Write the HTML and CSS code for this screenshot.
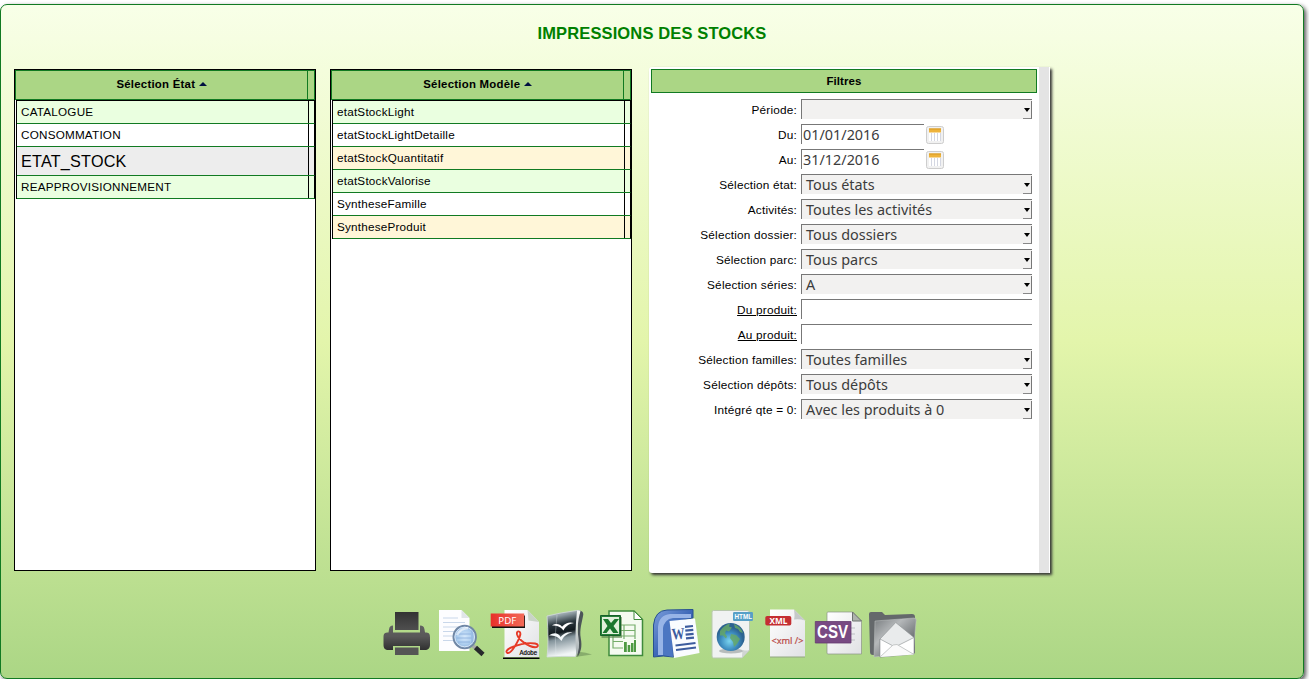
FILE: index.html
```html
<!DOCTYPE html>
<html lang="fr">
<head>
<meta charset="utf-8">
<title>Impressions des stocks</title>
<link rel="stylesheet" href="styles.css">
</head>
<body>
<main class="panel">
  <h1 class="title">IMPRESSIONS DES STOCKS</h1>
  <div class="columns">
    <section class="list">
      <header class="list-head"><span class="head-label">Sélection État <i class="sort"></i></span><span class="head-end"></span></header>
      <ul class="rows">
        <li class="row mint"><span>CATALOGUE</span></li>
        <li class="row"><span>CONSOMMATION</span></li>
        <li class="row selected"><span>ETAT_STOCK</span></li>
        <li class="row mint"><span>REAPPROVISIONNEMENT</span></li>
      </ul>
    </section>
    <section class="list">
      <header class="list-head"><span class="head-label">Sélection Modèle <i class="sort"></i></span><span class="head-end"></span></header>
      <ul class="rows">
        <li class="row mint"><span>etatStockLight</span></li>
        <li class="row"><span>etatStockLightDetaille</span></li>
        <li class="row cream"><span>etatStockQuantitatif</span></li>
        <li class="row mint"><span>etatStockValorise</span></li>
        <li class="row"><span>SyntheseFamille</span></li>
        <li class="row cream"><span>SyntheseProduit</span></li>
      </ul>
    </section>
    <section class="filters">
      <div class="filters-body">
        <h2 class="filters-head">Filtres</h2>
        <div class="field"><span class="label">Période:</span><div class="select"><span></span><b class="arrow"></b></div></div>
        <div class="field"><span class="label">Du:</span><div class="input date">01/01/2016</div>
          <svg class="cal" viewBox="0 0 18 18"><rect x=".5" y=".5" width="17" height="17" rx="2" fill="#f1f1f1" stroke="#cdcdcd"/><path d="M3 6h12v9H3z" fill="#fff"/><path d="M3 2.500h12v4H3z" fill="#eeb33b"/><path d="M3 3h12" stroke="#d79a25"/><path d="M5.500 7v8M8.500 7v8M11.500 7v8M14.500 7v8" stroke="#cfd3df" stroke-width=".9"/></svg></div>
        <div class="field"><span class="label">Au:</span><div class="input date">31/12/2016</div>
          <svg class="cal" viewBox="0 0 18 18"><rect x=".5" y=".5" width="17" height="17" rx="2" fill="#f1f1f1" stroke="#cdcdcd"/><path d="M3 6h12v9H3z" fill="#fff"/><path d="M3 2.500h12v4H3z" fill="#eeb33b"/><path d="M3 3h12" stroke="#d79a25"/><path d="M5.500 7v8M8.500 7v8M11.500 7v8M14.500 7v8" stroke="#cfd3df" stroke-width=".9"/></svg></div>
        <div class="field"><span class="label">Sélection état:</span><div class="select"><span>Tous états</span><b class="arrow"></b></div></div>
        <div class="field"><span class="label">Activités:</span><div class="select"><span>Toutes les activités</span><b class="arrow"></b></div></div>
        <div class="field"><span class="label">Sélection dossier:</span><div class="select"><span>Tous dossiers</span><b class="arrow"></b></div></div>
        <div class="field"><span class="label">Sélection parc:</span><div class="select"><span>Tous parcs</span><b class="arrow"></b></div></div>
        <div class="field"><span class="label">Sélection séries:</span><div class="select"><span>A</span><b class="arrow"></b></div></div>
        <div class="field"><span class="label link">Du produit:</span><div class="input"></div></div>
        <div class="field"><span class="label link">Au produit:</span><div class="input"></div></div>
        <div class="field"><span class="label">Sélection familles:</span><div class="select"><span>Toutes familles</span><b class="arrow"></b></div></div>
        <div class="field"><span class="label">Sélection dépôts:</span><div class="select"><span>Tous dépôts</span><b class="arrow"></b></div></div>
        <div class="field"><span class="label">Intégré qte = 0:</span><div class="select"><span>Avec les produits à 0</span><b class="arrow"></b></div></div>
      </div>
      <div class="scroll"></div>
    </section>
  </div>
  <nav class="tools">
    <svg class="tool" viewBox="0 0 54 56">
      <defs><linearGradient id="pr" x2="0" y2="1"><stop offset="0" stop-color="#333"/><stop offset="1" stop-color="#4f4f4f"/></linearGradient>
      <linearGradient id="prb" x2="0" y2="1"><stop offset="0" stop-color="#626262"/><stop offset=".45" stop-color="#585858"/><stop offset="1" stop-color="#303030"/></linearGradient></defs>
      <path d="M15 6h23.500v18H15z" fill="url(#pr)"/>
      <path d="M13 19.500v7h27v-7c3 0 4 1 4.500 4l.5 3c4 0 5 1 5 5v7c0 4-2 5.500-5 5.500h-5v-4H13v4H8.500c-3.500 0-5-1.500-5-5.500v-7c0-4 1-5 5-5l.5-3c.5-3 1.500-4 4-4z" fill="url(#prb)"/>
      <path d="M15 41.500h23.500V49H15z" fill="#555"/>
    </svg>
    <svg class="tool" viewBox="0 0 54 56">
      <defs><radialGradient id="ln"><stop offset="0" stop-color="#d5e8fb"/><stop offset=".7" stop-color="#a9cbed"/><stop offset="1" stop-color="#86a9d2"/></radialGradient></defs>
      <path d="M5 4h22.500l8 8v33H5z" fill="#fdfdff"/><path d="M27.500 4v8h8z" fill="#e0e5e8"/>
      <path d="M9 12h15M9 16.500h22M9 21h22M9 25.500h14M9 30h12M9 34.500h11" stroke="#c3d2e8" stroke-width=".9"/>
      <path d="M39 40l4 3" stroke="#aaa" stroke-width="4"/><path d="M41.500 41.500l7.500 7" stroke="#27292c" stroke-width="4.500"/>
      <circle cx="30.700" cy="31" r="11.300" fill="url(#ln)" stroke="#7187a4" stroke-width="1.800"/><circle cx="30.700" cy="31" r="9.800" fill="none" stroke="#d6e6f7"/>
      <path d="M23 28h14M22.500 32h15M24 36h12M38 24v13" stroke="#86abdb" stroke-width=".8"/><path d="M23 29q4-7 11-7" stroke="#fff" stroke-width="2.500" fill="none" opacity=".6"/>
    </svg>
    <svg class="tool" viewBox="0 0 54 56">
      <defs><linearGradient id="pg" x2="1" y2="1"><stop offset="0" stop-color="#fff"/><stop offset="1" stop-color="#e0e1e4"/></linearGradient><linearGradient id="rd" x2="1"><stop offset="0" stop-color="#e8302a"/><stop offset="1" stop-color="#f36a58"/></linearGradient></defs>
      <path d="M16.500 4h23l11.500 12v35H16.500z" fill="url(#pg)"/><path d="M39.500 4l1 10.500 10.500 1.500z" fill="#c9d4c7"/>
      <path d="M15 52.200h36.500" stroke="#000" stroke-width="1.600"/>
      <path d="M19.500 47c-2.500-1-.5-4 5-6 7-2.800 16-4.500 22.500-3.500 4 .8 3.500 3.800 0 3.800-6-.5-16.500-7-18-13-.8-4 4-4 3.300.5C31 34 23.500 48 19.500 47z" fill="none" stroke="#e63a27" stroke-width="1.900"/>
      <path d="M4 9.500h33V22H4z" fill="#111"/><path d="M2.700 7.500h33.500v13H2.700z" fill="url(#rd)"/>
      <text x="10.300" y="18" class="t-pdf" textLength="18" lengthAdjust="spacingAndGlyphs">PDF</text>
      <text x="31.500" y="49" class="t-adobe" textLength="17.500" lengthAdjust="spacingAndGlyphs">Adobe</text>
    </svg>
    <svg class="tool" viewBox="0 0 54 56">
      <defs><linearGradient id="oo" x2=".15" y2="1"><stop offset="0" stop-color="#dfe6e8"/><stop offset=".17" stop-color="#8d9aa1"/><stop offset=".34" stop-color="#2b373e"/><stop offset=".52" stop-color="#11191e"/><stop offset=".66" stop-color="#83939b"/><stop offset="1" stop-color="#f1f5f6"/></linearGradient>
      <linearGradient id="oe" x2="0" y2="1"><stop offset="0" stop-color="#f5f7f7"/><stop offset="1" stop-color="#a2abae"/></linearGradient></defs>
      <path d="M33 51l17-2.500q-8-3-13-2.500z" fill="#6d8f5a" opacity=".6"/>
      <path d="M36 4.500q5.500 0 5.300 4c-1.500 9-4 15-2.500 24 1.500 8 .2 13-3.300 18.500z" fill="#4c5558"/>
      <path d="M5 10q14-3.500 29.500-5.500h3C34.500 16 33.500 23 35 31c1.200 8 1 13-1.500 19.500Q20 50 5 51 7 36 5 10z" fill="url(#oo)" stroke="#d3dadd" stroke-width=".8"/>
      <path d="M35 4.500l3.500.5q-4.500 15-2 27 1.800 10-2 18-1-8-1-18 0-14 1.500-27.500z" fill="url(#oe)"/>
      <path d="M15 9q-3 20-1 41" stroke="#e9f0f1" stroke-width=".7" fill="none" opacity=".45"/>
      <path d="M10 19.500c4-2.500 8-1.500 10 1.200 4-4 7.500-5 12-3.700-6 1-8.500 3.500-10.500 7.500-3-4-6.500-5-11.500-5z" fill="#fff"/><path d="M7 29.500c5-3.500 9.500-2.500 11.500 1.500 3.500-4 7-5.500 12-4.500-6.500 1.500-9 4-11 8.500-3.500-4.500-7-5.500-12.500-5.500z" fill="#f4f8fa"/>
    </svg>
    <svg class="tool" viewBox="0 0 54 56">
      <path d="M13 5h25l8.500 8.500V49.500H13z" fill="#f5fbf1" stroke="#3f8a3c" stroke-width="1.500"/><path d="M38 5v8.500h8.500z" fill="#fff" stroke="#3f8a3c"/>
      <path d="M17 19h22v23H17zM17 24.500h22M17 30h22M17 35.500h22M28 19v23" fill="none" stroke="#76ad6b" stroke-width="1.200"/>
      <path d="M27 33h13v13H27z" fill="#f5fbf1"/><path d="M28 36h2.800v10H28zM31.700 39h2.500v7h-2.500zM35 37h2.500v9H35zM38 34h2v12h-2z" fill="#4e9a43"/>
      <path d="M5.500 11H26v21H5.500z" fill="#548248" opacity=".6"/><path d="M4.500 9.500h20v20h-20z" fill="#278039" stroke="#17602a"/><path d="M6 11h17v17H6z" fill="#e1f0db"/>
      <path d="M7 13h5l3 4 3.500-4H23l-5.500 7 5 7h-5.300L14 22.500 10.500 27H6.500l5-7z" fill="#1b772e"/>
    </svg>
    <svg class="tool" viewBox="0 0 54 56">
      <defs><linearGradient id="wd" x2="1" y2="1"><stop offset="0" stop-color="#7c9edb"/><stop offset=".5" stop-color="#3e68b8"/><stop offset="1" stop-color="#244b99"/></linearGradient></defs>
      <path d="M3.500 51V19Q5 4.500 17 4l26-.5V12L22 16l1.500 35Q13 49 3.500 51z" fill="url(#wd)" stroke="#27508f"/>
      <path d="M8 49V21Q9 9 20 8h21v4H23q-9 1-10 11v26z" fill="#98b4e7"/><path d="M13 49V23q1-9 10-10l18-1-20 4 2 35z" fill="#4c76c2"/>
      <path d="M19.500 15L45 12.500 49.500 47 24 52z" fill="#fafcff"/>
      <text x="22" y="33.500" class="t-word" textLength="13" lengthAdjust="spacingAndGlyphs" transform="rotate(-4 22 33)">W</text>
      <path d="M35 20.800l8-.8M35.300 24.600l8-.8M35.600 28.600l8-.8M36 32.400l8-.8M25.500 39.500l20-2.500M26 44l20-2.500" stroke="#3d5c9e" stroke-width="2.200"/>
    </svg>
    <svg class="tool" viewBox="0 0 54 56">
      <defs><radialGradient id="gl" cx=".45" cy=".65"><stop offset="0" stop-color="#7ad4ef"/><stop offset=".6" stop-color="#3f8fc2"/><stop offset="1" stop-color="#2c6291"/></radialGradient></defs>
      <path d="M9.500 4.500H43q2.500 0 2.500 2V44L38 52H9.500Q8 52 8 50V6q0-1.500 1.500-1.500z" fill="#f0f2f2" stroke="#b8c8ae"/><path d="M38 52q0-7 1-8 3 1 6.500 0z" fill="#d0d5d3"/>
      <ellipse cx="27" cy="45" rx="12" ry="2.500" fill="#889090" opacity=".55"/>
      <circle cx="26.700" cy="31" r="14" fill="url(#gl)"/>
      <path d="M16 25q4-6 10-7.500l-1 3 3 1-3 4-3-1-1 3 2 3-1 2-3-3-3 0zM27 28l5 1 4 4-3 5-3 3-1-5-3-4zM30 18q7 3 9 9l-3-1-2-3-3-1z" fill="#65a767" opacity=".85"/>
      <rect x="29" y="6" width="20" height="9" rx="1.200" fill="#579fc7"/><text x="30.500" y="13.200" class="t-html" textLength="17.500" lengthAdjust="spacingAndGlyphs">HTML</text>
    </svg>
    <svg class="tool" viewBox="0 0 54 56">
      <path d="M12 4h24l11 12v35.500H12z" fill="#92a681"/><path d="M12 3.500h24l11 11v36H12z" fill="url(#pg)"/><path d="M36 3.500q1 7 0 10 5-1 11 1z" fill="#c5c9c9"/>
      <rect x="7.300" y="10" width="26" height="9.600" rx="1.800" fill="#c42e32"/><text x="11.500" y="17.800" class="t-xml" textLength="18" lengthAdjust="spacingAndGlyphs">XML</text>
      <text x="13.500" y="38" class="t-tag" textLength="32" lengthAdjust="spacingAndGlyphs">&lt;xml /&gt;</text>
    </svg>
    <svg class="tool" viewBox="0 0 54 56">
      <path d="M16 6h24.500l9 9v33H16q-1 0-1-1V7q0-1 1-1z" fill="url(#pg)" stroke="#8b9287" stroke-width=".7"/><path d="M40.500 6v9h9z" fill="#aeb3ad" stroke="#6e7470"/>
      <path d="M38 22h5M38 28h5M38 34h5" stroke="#bcbfc2"/><path d="M3.300 15.500H39V37H3.300z" fill="#784a83" stroke="#643b70" stroke-width=".8"/>
      <text x="5" y="32.300" class="t-csv" textLength="31" lengthAdjust="spacingAndGlyphs">CSV</text>
    </svg>
    <svg class="tool" viewBox="0 0 54 56">
      <defs><linearGradient id="fo" x2="1" y2="1"><stop offset="0" stop-color="#777b7e"/><stop offset=".35" stop-color="#b5b8ba"/><stop offset=".7" stop-color="#73777a"/><stop offset="1" stop-color="#45494c"/></linearGradient></defs>
      <path d="M3 8q0-2 2-2h11l3 3 27-1q3 0 3 3v36L7 49q-3 0-3-3z" fill="#64686b"/><path d="M9 15l39-3q3 0 2 4l-3 31L8 51z" fill="url(#fo)" stroke="#c3c6c7" stroke-width=".5"/>
      <path d="M14 33l15.700-16.500L48 31.500V48l-34 3z" fill="#e9ebec" stroke="#8a8e90" stroke-width=".6"/>
      <path d="M14 33l15 8 19-9.500V48l-34 3z" fill="#fff" stroke="#8a8e90" stroke-width=".6"/><path d="M14 51l13-12 4-.5 17 10" fill="#fafafa" stroke="#b9bcbd" stroke-width=".8"/>
    </svg>
  </nav>
</main>
</body>
</html>
```
FILE: styles.css
```css
* { box-sizing: border-box; }
html { height: 100%; background: #fff; overflow: hidden; }
body { margin: 0; padding-top: 4px; font: 11.700px "Liberation Sans", Arial, sans-serif; color: #000; }
.panel {
  width: 1304px; height: 675px; border: 1px solid #117a22; border-radius: 7px;
  background: linear-gradient(#f8ffe8 0%, #e3f5ab 50%, #abd685 100%);
  box-shadow: 2px 2px 4px #555;
}
.title { margin: 0; padding-top: 18px; height: 64px; text-align: center; font-size: 16.500px; line-height: 20px; letter-spacing: .13px; color: #008000; }
.columns { display: flex; padding-left: 13px; height: 504px; align-items: flex-start; }
.list { width: 302px; height: 502px; margin-right: 14px; border: 1px solid #000; background: #fff; letter-spacing: .22px; }
.list-head { display: flex; height: 30px; background: #abd685; border: 1px solid #117a22; font-weight: bold; font-size: 11.400px; line-height: 27px; letter-spacing: .25px; }
.head-label { width: 292px; text-align: center; border-right: 1px solid #117a22; }
.sort { display: inline-block; border: 4px solid transparent; border-top: 0; border-bottom: 4px solid #001040; vertical-align: 2px; }
.rows { list-style: none; margin: 0 0 0 1px; padding: 0; border-top: 1px solid #000; border-left: 1px solid #000; }
.row { display: flex; height: 23px; border-right: 1px solid #000; border-bottom: 1px solid #117a22; line-height: 22px; }
.row span { width: 292px; padding-left: 4px; border-right: 1px solid #000; }
.mint { background: #eaffe0; }
.cream { background: #fff6d8; }
.selected { height: 29px; background: #ededed; font-size: 16.200px; line-height: 28px; }
.filters { display: flex; width: 401px; height: 506px; margin: -2px 0 0 3px; padding-right: 1px; background: #fff; border-radius: 3px 0 0 3px; box-shadow: 2px 2px 3px #333; }
.filters-body { width: 390px; padding: 2px 2px 0; }
.filters-head { width: 386px; height: 24px; margin: 0 0 6px; border: 1px solid #117a22; background: #abd685; text-align: center; font-size: 11.500px; line-height: 22px; letter-spacing: .1px; }
.scroll { width: 10px; background: #e4e4e4; }
.field { display: flex; height: 25px; align-items: flex-start; }
.label { width: 146px; margin-right: 4px; text-align: right; line-height: 22px; font-size: 11.800px; letter-spacing: .2px; }
.link { text-decoration: underline; }
.select, .input { display: flex; justify-content: space-between; width: 231px; height: 20px; border-top: 1px solid #777; border-left: 1px solid #777; font: 14.400px/19px "Noto Sans", sans-serif; color: #3c3c3c; }
.select { background: #f2f1f0; padding-left: 4px; }
.input { background: #fff; padding-left: 1px; }
.date { width: 123px; }
.arrow { width: 9px; height: 18px; margin-top: 1px; border-right: 1px solid #777; border-bottom: 1px solid #888; display: flex; align-items: center; justify-content: flex-end; }
.arrow::after { content: ""; border: 3px solid transparent; border-top: 4px solid #000; border-bottom: 0; margin-right: 1px; }
.cal { width: 18px; height: 18px; margin: 2px 0 0 2px; }
.tools { display: flex; margin: 33px 0 0 379px; }
.tool { width: 54px; height: 56px; }
.t-pdf { font: 9px "Noto Sans", sans-serif; fill: #fff; }
.t-adobe { font: 7px "Liberation Sans", sans-serif; fill: #000; stroke: #000; stroke-width: .2; }
.t-word { font: bold 16px "Liberation Serif", serif; fill: #3d5c9e; }
.t-html { font: bold 7.500px "Liberation Sans", sans-serif; fill: #fff; }
.t-xml { font: bold 8.500px "Noto Sans", sans-serif; fill: #fff; }
.t-tag { font: 9px "Noto Sans", sans-serif; fill: #b94b46; stroke: #b94b46; stroke-width: .2; }
.t-csv { font: bold 18px "Liberation Sans", sans-serif; fill: #fff; }
```
